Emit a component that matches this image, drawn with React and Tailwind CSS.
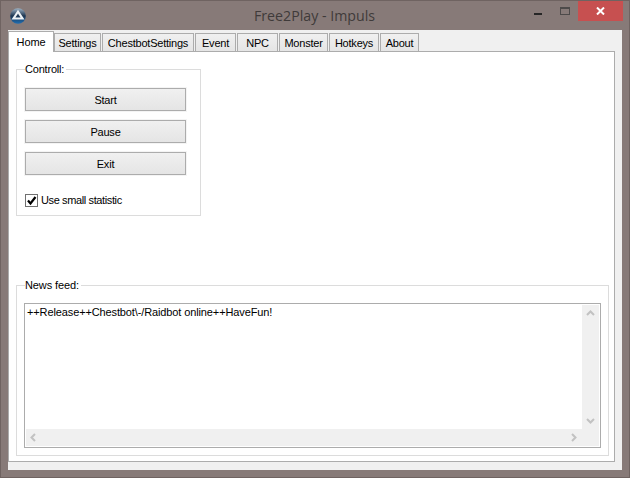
import React from 'react';

const tabs = [
  { name: 'Settings', width: 'w-[47px]' },
  { name: 'ChestbotSettings', width: 'w-[92px]' },
  { name: 'Event', width: 'w-[41px]' },
  { name: 'NPC', width: 'w-[41px]' },
  { name: 'Monster', width: 'w-[49px]' },
  { name: 'Hotkeys', width: 'w-[50px]' },
  { name: 'About', width: 'w-[39px]' },
];

function AppIcon() {
  return (
    <svg width="16" height="16" viewBox="0 0 16 16">
      <defs>
        <linearGradient id="ball" x1="0" y1="0" x2="0" y2="1">
          <stop offset="0" stopColor="#9fb4c6" />
          <stop offset="0.5" stopColor="#1d3550" />
          <stop offset="1" stopColor="#1f6fb5" />
        </linearGradient>
      </defs>
      <circle cx="8" cy="8" r="7.8" fill="url(#ball)" />
      <path d="M8 1.8 L14.5 11.5 H1.5 Z M8 5.6 L5.4 9.6 H10.6 Z" fill="#eef2f5" fillRule="evenodd" />
    </svg>
  );
}

function WinButton({ children }) {
  return (
    <button type="button" className="h-[23px] w-[161px] border border-[#acacac] bg-gradient-to-b from-[#f0f0f0] to-[#e5e5e5] pt-[1px] text-[11px] tracking-[-0.2px] text-black outline outline-1 outline-[#f4f4f4]">
      {children}
    </button>
  );
}

function Chevron({ d }) {
  return (
    <svg width="9" height="9" viewBox="0 0 9 9">
      <path d={d} fill="none" stroke="#c2c2c2" strokeWidth="2" />
    </svg>
  );
}

export default function App() {
  return (
    <div className="flex h-[478px] w-[630px] flex-col border border-[#6f6361] bg-[#877a78] font-['Liberation_Sans',sans-serif] text-[11px] tracking-[-0.12px] text-black">
      {/* title bar */}
      <div className="flex h-[29px] shrink-0 items-start">
        <div className="ml-[9px] mt-[7px]">
          <AppIcon />
        </div>
        <div className="mt-[6px] flex-1 pl-[69px] text-center font-['Open_Sans',sans-serif] text-[14.2px] leading-[18px] tracking-normal text-[#3f3a3a]">
          Free2Play - Impuls
        </div>
        <div className="mt-[12px] h-[2px] w-[8px] bg-[#262626]" />
        <div className="ml-[18px] mt-[6px] h-[8px] w-[10px] border border-t-2 border-[#4d4a4a]" />
        <div className="ml-[8px] flex h-[20px] w-[45px] items-center justify-center bg-[#c75050]">
          <svg width="9" height="8" viewBox="0 0 9 8">
            <path d="M1 0.5 L8 7.5 M8 0.5 L1 7.5" stroke="#fff" strokeWidth="2" />
          </svg>
        </div>
        <div className="w-[6px]" />
      </div>

      {/* client area */}
      <div className="mx-[7px] flex h-[440px] flex-col bg-[#f0f0f0] pr-[7px]">
        <div className="flex h-[21px] shrink-0 items-end gap-[1px]">
          <div className="z-10 -mb-px -mr-[1px] flex h-[21px] w-[46px] justify-center border border-b-0 border-[#acacac] bg-white pt-[3px] leading-[14px]">
            Home
          </div>
          {tabs.map((tab) => (
            <div
              key={tab.name}
              className={`${tab.width} flex h-[18px] shrink-0 justify-center border border-b-0 border-[#acacac] bg-gradient-to-b from-[#f0f0f0] to-[#e5e5e5] pt-[2px] leading-[14px] tracking-[-0.22px]`}
            >
              {tab.name}
            </div>
          ))}
        </div>

        {/* tab page */}
        <div className="flex h-[411px] flex-col border border-[#acacac] bg-white pl-[7px] pr-[5px]">
          <fieldset className="mt-[10px] h-[154px] w-[185px] border border-[#dcdcdc] pl-[8px]">
            <legend className="pr-[2px] leading-[14px] tracking-[-0.2px]">Controll:</legend>
            <div className="mt-[12px] flex flex-col gap-[9px]">
              <WinButton>Start</WinButton>
              <WinButton>Pause</WinButton>
              <WinButton>Exit</WinButton>
            </div>
            <div className="mt-[18px] flex items-center gap-[3px]">
              <span className="flex h-[13px] w-[13px] items-center justify-center border border-[#707070] bg-white">
                <svg width="11" height="11" viewBox="0 0 11 11">
                  <path d="M2 5.5 L4.5 8.5 L9.5 2" fill="none" stroke="#000" strokeWidth="2.2" />
                </svg>
              </span>
              <span className="leading-[14px] tracking-[-0.38px]">Use small statistic</span>
            </div>
          </fieldset>

          <fieldset className="mt-[62px] h-[178px] border border-[#dcdcdc] px-[7px]">
            <legend className="ml-[1px] pr-[2px] leading-[14px]">News feed:</legend>
            <div className="mt-[11px] flex h-[145px] flex-col border border-[#acacac] bg-white p-[1px]">
              <div className="flex min-h-0 flex-1">
                <div className="flex-1 px-[1px] leading-[15px]">++Release++Chestbot\-/Raidbot online++HaveFun!</div>
                <div className="flex w-[17px] flex-col items-center justify-between bg-[#f0f0f0] py-[4px]">
                  <Chevron d="M1 6 L4.5 2.5 L8 6" />
                  <Chevron d="M1 3 L4.5 6.5 L8 3" />
                </div>
              </div>
              <div className="flex h-[17px] items-center justify-between bg-[#f0f0f0] pl-[3px] pr-[21px]">
                <Chevron d="M6 1 L2.5 4.5 L6 8" />
                <Chevron d="M3 1 L6.5 4.5 L3 8" />
              </div>
            </div>
          </fieldset>
        </div>
      </div>
    </div>
  );
}
